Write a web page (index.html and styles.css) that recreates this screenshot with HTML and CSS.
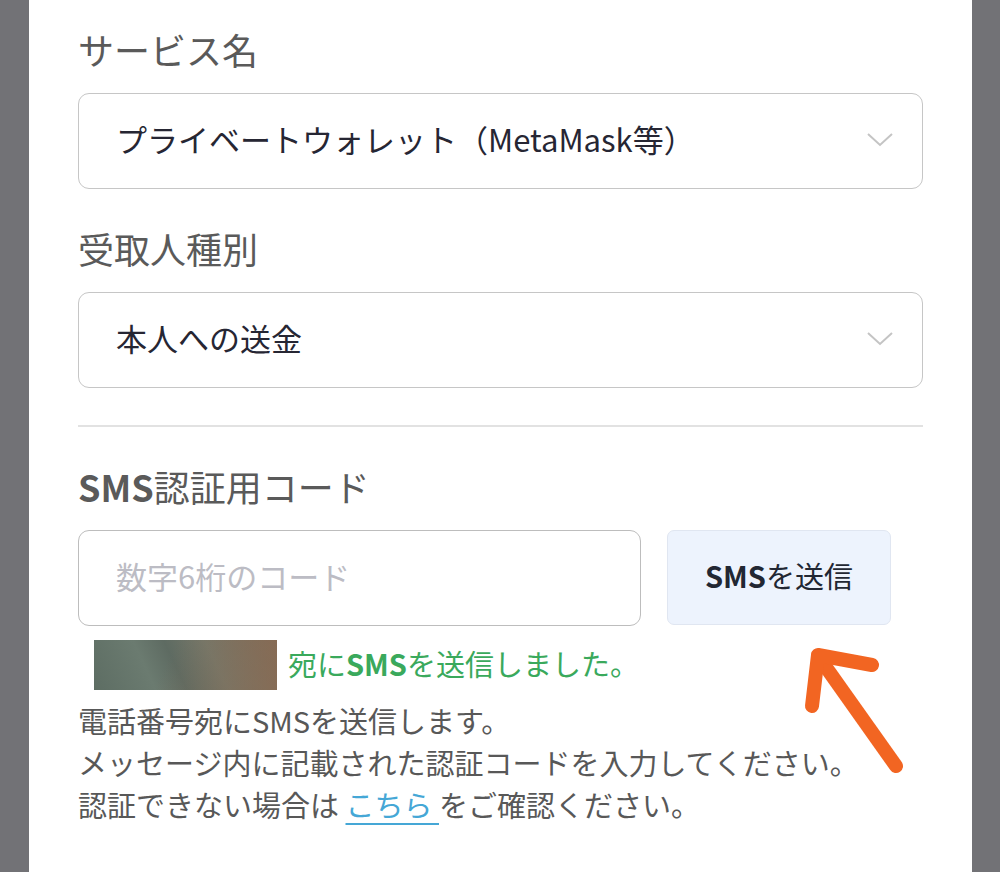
FILE: index.html
```html
<!DOCTYPE html>
<html lang="ja">
<head>
    <meta charset="UTF-8">
    <meta name="viewport" content="width=device-width, initial-scale=1.0">
    <title>送金先の登録</title>
    <link rel="stylesheet" href="styles.css">
</head>
<body>
    <div class="page">
        <div class="card">
            <div class="field">
                <label class="field-label">サービス名</label>
                <div class="select">
                    <span>プライベートウォレット（MetaMask等）</span>
                    <svg class="chevron" width="26" height="14" viewBox="0 0 26 14"><path d="M1 1 L13 12 L25 1" fill="none" stroke="#c4c4c4" stroke-width="2"/></svg>
                </div>
            </div>
            <div class="field">
                <label class="field-label">受取人種別</label>
                <div class="select">
                    <span>本人への送金</span>
                    <svg class="chevron" width="26" height="14" viewBox="0 0 26 14"><path d="M1 1 L13 12 L25 1" fill="none" stroke="#c4c4c4" stroke-width="2"/></svg>
                </div>
            </div>

            <hr class="divider">

            <div class="field sms">
                <label class="field-label"><b>SMS</b>認証用コード</label>
                <div class="sms-row">
                    <input class="code-input" type="text" placeholder="数字6桁のコード">
                    <button class="sms-btn"><b>SMS</b>を送信</button>
                </div>
                <div class="sent-note">
                    <span class="masked"></span>
                    <span class="sent-text">宛に<b>SMS</b>を送信しました。</span>
                </div>
                <p class="help">
                    電話番号宛にSMSを送信します。<br>
                    メッセージ内に記載された認証コードを入力してください。<br>
                    認証できない場合は <a href="#">こちら </a>をご確認ください。
                </p>
            </div>
        </div>

        <svg class="arrow" width="1000" height="872" viewBox="0 0 1000 872">
            <g fill="none" stroke="#f26522" stroke-width="14" stroke-linecap="round" stroke-linejoin="round">
                <path d="M896 766 L818 656"/>
                <path d="M812 706 L818 655 L872 665"/>
            </g>
        </svg>
    </div>
</body>
</html>
```

FILE: styles.css
```css
body {
    margin: 0;
    padding: 0;
    background-color: #727276;
    font-family: "Noto Sans CJK JP", "Noto Sans", sans-serif;
}

.page {
    position: relative;
    width: 1000px;
    height: 872px;
    overflow: hidden;
}

.card {
    background-color: #fff;
    width: 943px;
    height: 872px;
    margin-left: 29px;
    box-sizing: border-box;
    padding: 27px 49px 0 49px;
}

.field + .field {
    margin-top: 37px;
}

.field-label {
    display: block;
    font-size: 36px;
    line-height: 44px;
    color: #5a5a5a;
    margin-bottom: 22px;
}

.field-label b {
    font-weight: 700;
}

.select {
    display: flex;
    align-items: center;
    justify-content: space-between;
    height: 96px;
    box-sizing: border-box;
    border: 1.5px solid #c6c6c6;
    border-radius: 11px;
    padding: 0 29px 5px 37px;
    font-size: 31px;
    color: #262633;
}

.chevron {
    margin-top: 3px;
}

.divider {
    border: none;
    height: 2px;
    background-color: #e2e2e2;
    margin: 37px 0 0 0;
}

.field.sms {
    margin-top: 37px;
}

.sms-row {
    display: flex;
    gap: 26px;
}

.code-input {
    width: 563px;
    height: 96px;
    box-sizing: border-box;
    border: 1.5px solid #bdbdbd;
    border-radius: 11px;
    padding: 0 37px 5px 37px;
    font-family: inherit;
    font-size: 31px;
    color: #262633;
    outline: none;
}

.code-input::placeholder {
    color: #bcbcc4;
}

.sms-btn {
    width: 224px;
    height: 95px;
    padding: 0 0 5px 0;
    background-color: #edf3fd;
    border: 1.5px solid #e0e6f1;
    border-radius: 7px;
    font-family: inherit;
    font-size: 29px;
    font-weight: 400;
    color: #222733;
    cursor: pointer;
}

.sms-btn b {
    font-weight: 700;
}

.sent-note {
    display: flex;
    align-items: center;
    gap: 11px;
    margin: 14px 0 0 16px;
}

.masked {
    display: block;
    width: 183px;
    height: 50px;
    background:
        linear-gradient(115deg, transparent 40%, rgba(140, 105, 80, 0.55) 100%),
        linear-gradient(65deg, #5d6d63 0%, #6b7b70 30%, #5e6b62 45%, #75786a 65%, #816c58 100%);
}

.sent-text {
    font-size: 29px;
    color: #3aa95c;
    padding-bottom: 5px;
}

.help {
    margin: 9px 0 0 0;
    font-size: 29px;
    line-height: 42px;
    color: #585858;
}

.help a {
    color: #45a7d6;
    text-decoration: underline;
    text-underline-offset: 6px;
}

.arrow {
    position: absolute;
    left: 0;
    top: 0;
    pointer-events: none;
}
```
